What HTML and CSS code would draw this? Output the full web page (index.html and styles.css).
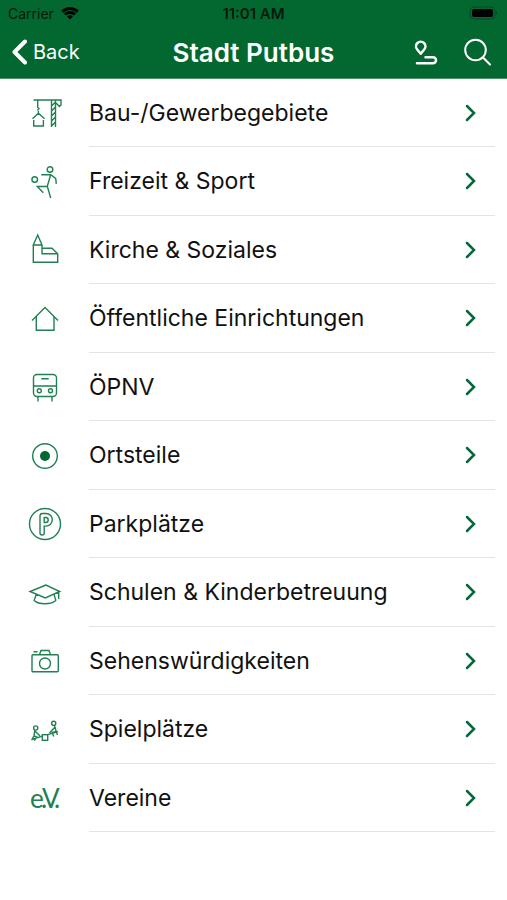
FILE: index.html
```html
<!DOCTYPE html>
<html lang="de">
<head>
<meta charset="utf-8">
<meta name="viewport" content="width=device-width, initial-scale=1">
<title>Stadt Putbus</title>
<link rel="stylesheet" href="styles.css">
</head>
<body>
<header class="header">
  <div class="status">
    <div class="carrier">
      <span>Carrier</span>
      <svg class="wifi" viewBox="0 0 18 13" aria-hidden="true"><path d="M1.3 4.7a11 11 0 0 1 15.4 0M4 7.5a7.2 7.2 0 0 1 10 0"/><path class="solid" d="M9 12.6 6.1 9.6a4.2 4.2 0 0 1 5.800 0z"/></svg>
    </div>
    <time class="clock">11:01 AM</time>
    <svg class="battery" viewBox="0 0 30 14" aria-hidden="true"><rect class="shell" x="1" y="1" width="25" height="12" rx="4"/><rect x="3" y="3" width="21" height="8" rx="2"/><path class="tip" d="M27 5q3 2 0 4z"/></svg>
  </div>
  <nav class="bar">
    <a class="back" href="#"><svg class="back-icon" viewBox="0 0 16 26" aria-hidden="true"><path d="M14 2.500 3.500 13 14 23.500"/></svg>Back</a>
    <h1 class="title">Stadt Putbus</h1>
    <div class="actions">
      <button class="action" type="button" aria-label="Route"><svg viewBox="0 0 28 28"><path class="bold" d="M8.700 15.800 5.200 11.500a4.700 4.700 0 1 1 7 0z"/><path class="bold" d="M13.500 19.300H21a3 3 0 0 1 0 6H5"/></svg></button>
      <button class="action" type="button" aria-label="Suche"><svg viewBox="0 0 28 28"><circle cx="11.500" cy="12" r="10.300"/><path d="m19 19.500 7 7"/></svg></button>
    </div>
  </nav>
</header>
<main>
<ul class="list">
  <li class="row"><svg class="icon" viewBox="0 0 32 32"><path d="M4.500 3H32v5l-1.500 1.500L27 6M22.500 3v27M26.500 3v27M22.500 9l4-4M22.500 14l4-4M22.500 19l4-4M22.500 24l4-4M22.500 29l4-4M8.700 3v7.500l1.300 1-1.500 2M9.400 14v2.300M3.500 21.700l5.900-5.400 6.100 5.400M4.700 23v6h9.700v-6"/></svg><a class="link" href="#">Bau-/Gewerbegebiete<svg class="chevron" viewBox="0 0 12 18"><path d="m2 2 7 7-7 7"/></svg></a></li>
  <li class="row"><svg class="icon" viewBox="0 0 32 32"><circle cx="21" cy="3.500" r="2.800"/><circle cx="5.700" cy="13.500" r="2.800"/><path d="M12.300 8.800h9.400l5 3.700.6 5.300M21.700 8.800l-3.400 11.500L21.700 32M18.300 20.500h-10l6 6.300"/></svg><a class="link" href="#">Freizeit &amp; Sport<svg class="chevron" viewBox="0 0 12 18"><path d="m2 2 7 7-7 7"/></svg></a></li>
  <li class="row"><svg class="icon" viewBox="0 0 32 32"><path d="M4.300 11 8.700 1 13 11zM4.300 11v17.300h24.400v-8.600L23 14.300H13M13 11v8.700h15.700"/></svg><a class="link" href="#">Kirche &amp; Soziales<svg class="chevron" viewBox="0 0 12 18"><path d="m2 2 7 7-7 7"/></svg></a></li>
  <li class="row"><svg class="icon" viewBox="0 0 32 32"><path d="M3 17.500l13-13 13 13M7.300 13.500v13.700H25V13.500"/></svg><a class="link" href="#">Öffentliche Einrichtungen<svg class="chevron" viewBox="0 0 12 18"><path d="m2 2 7 7-7 7"/></svg></a></li>
  <li class="row"><svg class="icon" viewBox="0 0 32 32"><rect x="4.500" y="3.500" width="23" height="22" rx="3.500"/><path d="M4.500 15h23M12.300 7.700h7.400M9 25.500v5M23 25.500v5"/><circle cx="10.300" cy="19.700" r="2"/><circle cx="21.500" cy="19.700" r="2"/></svg><a class="link" href="#">ÖPNV<svg class="chevron" viewBox="0 0 12 18"><path d="m2 2 7 7-7 7"/></svg></a></li>
  <li class="row"><svg class="icon" viewBox="0 0 32 32"><circle cx="16" cy="16" r="12.300"/><circle class="fill" cx="16" cy="16" r="5"/></svg><a class="link" href="#">Ortsteile<svg class="chevron" viewBox="0 0 12 18"><path d="m2 2 7 7-7 7"/></svg></a></li>
  <li class="row"><svg class="icon" viewBox="0 0 32 32"><circle cx="16" cy="16" r="15.500"/><path d="M11 8q0-2.500 2.500-2.500H17a6.300 6.300 0 0 1 0 12.600h-1.800V25q0 2-2.100 2T11 25zM15.200 9.500h1.500a2.500 2.500 0 0 1 0 5h-1.500z"/></svg><a class="link" href="#">Parkplätze<svg class="chevron" viewBox="0 0 12 18"><path d="m2 2 7 7-7 7"/></svg></a></li>
  <li class="row"><svg class="icon" viewBox="0 0 32 32"><path d="M17 8 1 14.500 16.300 21l14.400-6.500zM7 17.500c-.3 3-1.800 4-1.800 6.200 2.500 1 1.800 3 10.800 3s8.500-2 10.700-3c0-2.200-1.400-3.200-1.400-6.200M29.700 15v7"/></svg><a class="link" href="#">Schulen &amp; Kinderbetreuung<svg class="chevron" viewBox="0 0 12 18"><path d="m2 2 7 7-7 7"/></svg></a></li>
  <li class="row"><svg class="icon" viewBox="0 0 32 32"><rect x="3" y="9.800" width="26.300" height="17" rx="1"/><circle cx="16" cy="18.500" r="5.500"/><path d="M10.500 9.800 12 5.500h8l1.500 4.300M4.500 6.800h4"/></svg><a class="link" href="#">Sehenswürdigkeiten<svg class="chevron" viewBox="0 0 12 18"><path d="m2 2 7 7-7 7"/></svg></a></li>
  <li class="row"><svg class="icon" viewBox="0 0 32 32"><circle cx="6.700" cy="14" r="2.100"/><circle cx="24.700" cy="9.300" r="2.100"/><rect x="13.300" y="20.700" width="5.400" height="5.600"/><path d="m2.300 25.700 11-3.500M18.700 20.700l10.500-3M5.800 16.200 5 22l2.800 1-2.500 3.500M6 17l5 5M4.500 22.500 3 26M25.500 11.500l1.700 6-4 1 1.500 4M26 13l-5.500 6M27 17l1.500 4"/></svg><a class="link" href="#">Spielplätze<svg class="chevron" viewBox="0 0 12 18"><path d="m2 2 7 7-7 7"/></svg></a></li>
  <li class="row"><svg class="icon" viewBox="0 0 32 32"><text class="mono" x="1 12 13 25" y="26">e.V.</text></svg><a class="link" href="#">Vereine<svg class="chevron" viewBox="0 0 12 18"><path d="m2 2 7 7-7 7"/></svg></a></li>
</ul>
</main>
</body>
</html>
```
FILE: styles.css
```css
* { box-sizing: border-box; }
body {
  margin: 0;
  background: #fff;
  color: #111;
  font-family: Inter, "Liberation Sans", sans-serif;
}
svg { fill: none; stroke: currentColor; flex: none; }
a { color: inherit; text-decoration: none; }

.header {
  background: #03682f;
  color: #fff;
  border-bottom: 1px solid #4b9169;
}
.status {
  display: grid;
  grid-template-columns: 1fr auto 1fr;
  align-items: center;
  height: 26px;
  padding: 0 8px;
  color: #031a0c;
  font-size: 14px;
}
.carrier { display: flex; align-items: center; gap: 7px; }
.wifi { width: 18px; height: 13px; stroke-width: 3; color: #000; }
.wifi .solid { fill: currentColor; stroke: none; }
.clock { font-size: 15px; font-weight: 600; }
.battery { width: 30px; height: 14px; justify-self: end; fill: #000; stroke: none; }
.battery .shell { fill: none; stroke: #02491f; }
.battery .tip { fill: #02491f; }

.bar {
  display: grid;
  grid-template-columns: 1fr auto 1fr;
  align-items: center;
  height: 52px;
  padding: 0 11px;
}
.back { display: flex; align-items: center; gap: 6px; font-size: 20px; }
.back-icon { width: 16px; height: 26px; stroke-width: 4; stroke-linecap: round; stroke-linejoin: round; }
.title { margin: 0; font-size: 26px; font-weight: 600; }
.actions { display: flex; justify-content: flex-end; gap: 24px; padding-right: 4px; }
.action { padding: 0; border: 0; background: none; color: inherit; width: 28px; height: 28px; }
.action svg { display: block; width: 28px; height: 28px; stroke-width: 2; stroke-linecap: round; stroke-linejoin: round; }
.action .bold { stroke-width: 2.500; }

.list { margin: 0; padding: 0 12px 0 29px; list-style: none; }
.row { display: flex; align-items: center; gap: 28px; height: 68px; }
.row:nth-child(even) { height: 69px; }
.icon { width: 32px; height: 32px; color: #218052; stroke-width: 1.4; overflow: visible; }
.icon .fill { fill: #03682f; stroke: none; }
.icon .mono { fill: currentColor; stroke: none; font: 400 26px Lato, sans-serif; }
.link {
  display: flex;
  align-items: center;
  justify-content: space-between;
  flex: 1;
  height: 100%;
  padding-right: 18px;
  border-bottom: 1px solid #e4e4e4;
  font-size: 23px;
}
.chevron { width: 12px; height: 18px; color: #03683a; stroke-width: 2.5; stroke-linecap: round; }
```
